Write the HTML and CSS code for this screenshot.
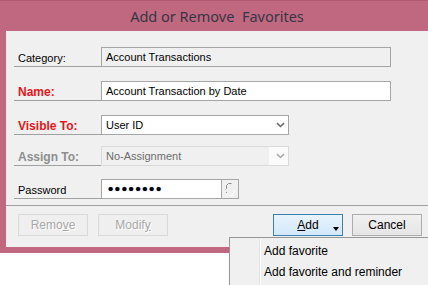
FILE: index.html
```html
<!DOCTYPE html>
<html lang="en">
<head>
  <meta charset="UTF-8">
  <title>Add or Remove Favorites</title>
  <link rel="stylesheet" href="styles.css">
</head>
<body>
  <div class="window">
    <div class="titlebar">Add or Remove  Favorites</div>

    <div class="panel">
      <div class="rows">
        <div class="row">
          <label class="lbl">Category:</label>
          <div class="box box-readonly wide">Account Transactions</div>
        </div>

        <div class="row">
          <label class="lbl lbl-req">Name:</label>
          <div class="box wide">Account Transaction by Date</div>
        </div>

        <div class="row">
          <label class="lbl lbl-req">Visible To:</label>
          <div class="box combo">
            <span>User ID</span>
            <svg class="chev" width="9" height="6" viewBox="0 0 9 6"><path d="M1 1.2 L4.5 4.5 L8 1.2" fill="none" stroke="#6b6b6b" stroke-width="1.6"/></svg>
          </div>
        </div>

        <div class="row row-assign">
          <label class="lbl lbl-off">Assign To:</label>
          <div class="box combo combo-off">
            <span>No-Assignment</span>
            <svg class="chev" width="9" height="6" viewBox="0 0 9 6"><path d="M1 1.2 L4.5 4.5 L8 1.2" fill="none" stroke="#acacac" stroke-width="1.6"/></svg>
          </div>
        </div>

        <div class="row row-pw">
          <label class="lbl">Password</label>
          <div class="box pw"><span class="dots">••••••••</span></div>
          <div class="pw-btn">
            <svg width="16" height="18" viewBox="0 0 16 18"><path d="M9.5 3.5 H6.5 L4.5 5.5 V8.5 L3.5 9.5" fill="none" stroke="#8a8a8a" stroke-width="1"/><path d="M13 11 L9.5 15.5 H7" fill="none" stroke="#ffffff" stroke-width="1.2"/><path d="M4.5 12 V13" stroke="#9a9a9a" stroke-width="1"/></svg>
          </div>
        </div>
      </div>

      <div class="sep"></div>

      <div class="buttons">
        <div class="group">
          <div class="btn btn-off">Remo<u>v</u>e</div>
          <div class="btn btn-off">Modif<u>y</u></div>
        </div>
        <div class="group">
          <div class="btn btn-add"><u>A</u>dd<span class="tri"></span></div>
          <div class="btn">Cancel</div>
        </div>
      </div>
    </div>
  </div>

  <div class="menu">
    <div class="menu-item">Add favorite</div>
    <div class="menu-item">Add favorite and reminder</div>
  </div>
</body>
</html>
```

FILE: styles.css
```css
html, body {
  margin: 0;
  padding: 0;
  overflow: hidden;
  background: #fff;
}

body {
  width: 428px;
  height: 285px;
  position: relative;
  font-family: "Liberation Sans", Arial, sans-serif;
  font-size: 11px;
  color: #000;
}

.window {
  background: #c0687f;
  border-top: 1px solid #b05a71;
  padding: 0 0 6px 6px;
}

.titlebar {
  height: 30px;
  line-height: 31px;
  text-align: center;
  white-space: pre;
  font-family: "Noto Sans", sans-serif;
  font-size: 14.5px;
  color: #363646;
}

.panel {
  background: #f0f0f0;
  height: 216px;
}

.rows {
  display: flex;
  flex-direction: column;
  gap: 14px;
  padding: 16px 0 0 8px;
}

.row {
  display: flex;
  height: 20px;
}

.row-assign {
  margin-top: -3px;
}

.row-pw {
  margin-top: -1px;
}

.lbl {
  width: 87px;
  box-sizing: border-box;
  border-bottom: 1px solid #a0a0a0;
  padding: 3px 0 0 4px;
  line-height: 16px;
}

.lbl-req {
  color: #e8141a;
  font-weight: bold;
  font-size: 12px;
}

.lbl-off {
  color: #8e8e8e;
  font-weight: bold;
  font-size: 12px;
}

.box {
  box-sizing: border-box;
  height: 20px;
  border: 1px solid #a5a5a5;
  background: #fff;
  padding: 0 4px;
  line-height: 18px;
  display: flex;
  align-items: center;
}

.wide {
  width: 290px;
}

.box-readonly {
  background: #f0f0f0;
}

.combo {
  width: 188px;
  justify-content: space-between;
  padding-right: 3px;
}

.combo-off {
  border-color: #d9d9d9;
  background: linear-gradient(to right, #f0f0f0 167px, #fbfbfb 167px);
  color: #6d6d6d;
}

.chev {
  display: block;
}

.pw {
  width: 121px;
  padding-left: 6px;
}

.dots {
  font-size: 15px;
  letter-spacing: 1.6px;
  color: #000;
  text-shadow: 0 0 1px #3a4a9a;
}

.pw-btn {
  box-sizing: border-box;
  width: 18px;
  height: 20px;
  margin-left: -1px;
  border: 1px solid #a5a5a5;
  background: #f0f0f0;
}

.pw-btn svg {
  display: block;
}

.sep {
  height: 1px;
  background: #a0a0a0;
  margin-top: 6px;
}

.buttons {
  display: flex;
  justify-content: space-between;
  padding: 8px 6px 0 12px;
}

.group {
  display: flex;
  gap: 10px;
}

.group + .group {
  gap: 9px;
}

.btn {
  position: relative;
  box-sizing: border-box;
  width: 70px;
  height: 22px;
  line-height: 20px;
  text-align: center;
  border: 1px solid #acacac;
  background: linear-gradient(#f0f0f0, #e5e5e5);
  font-family: "Liberation Sans", Arial, sans-serif;
  font-size: 12px;
}

.btn-off {
  border-color: #d9d9d9;
  background: #efefef;
  color: #a8a8a8;
  text-shadow: 1px 1px 0 #fff;
}

.btn-add {
  border-color: #3c7fb1;
  background: linear-gradient(#e8f3fc, #d2e8fb);
}

.tri {
  position: absolute;
  right: 3px;
  bottom: 4px;
  width: 0;
  height: 0;
  border-left: 3.5px solid transparent;
  border-right: 3.5px solid transparent;
  border-top: 4px solid #000;
}

.menu {
  position: absolute;
  left: 229px;
  top: 237px;
  width: 220px;
  height: 60px;
  box-sizing: border-box;
  border: 1px solid #979797;
  background: #f0f0f0;
  padding-top: 2px;
  font-family: "Liberation Sans", Arial, sans-serif;
  font-size: 12px;
}

.menu::before {
  content: "";
  position: absolute;
  left: 29px;
  top: 1px;
  bottom: 0;
  width: 1px;
  background: #e2e3e3;
  border-right: 1px solid #fff;
}

.menu-item {
  height: 21px;
  line-height: 22px;
  padding-left: 34px;
}
```
